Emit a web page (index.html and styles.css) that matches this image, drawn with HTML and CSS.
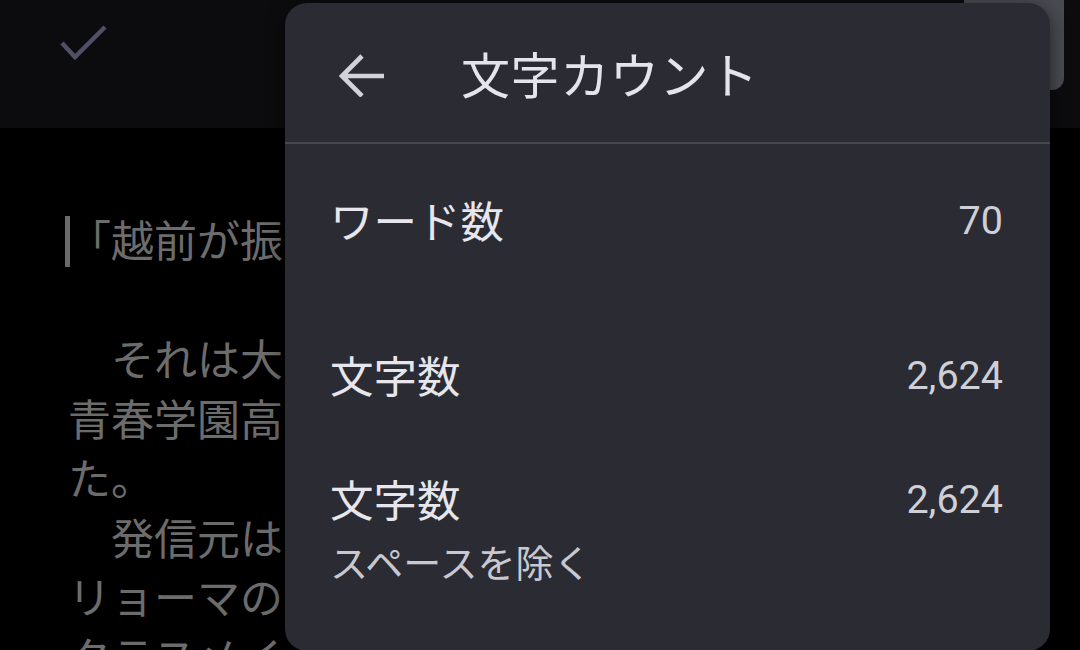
FILE: index.html
```html
<!DOCTYPE html>
<html lang="ja">
<head>
<meta charset="utf-8">
<title>文字カウント</title>
<link rel="stylesheet" href="styles.css">
</head>
<body>
<div class="screen">
  <header class="toolbar">
    <svg class="check" width="56" height="44" viewBox="0 0 56 44">
      <polyline points="6,23 19,37 49,7" fill="none" stroke="#4f4f66" stroke-width="4.5"/>
    </svg>
    <div class="tool-chip"></div>
  </header>
  <main class="editor">
    <div class="line"><span class="caret"></span>「越前が振</div>
    <div class="line">&nbsp;</div>
    <div class="line">　それは大</div>
    <div class="line">青春学園高</div>
    <div class="line">た。</div>
    <div class="line">　発信元は</div>
    <div class="line">リョーマの</div>
    <div class="line">クラスメイ</div>
  </main>

  <section class="menu">
    <div class="menu-head">
      <svg class="back" width="48" height="48" viewBox="0 0 48 48">
        <path d="M46 27H4M24 7L4 27L24 47" fill="none" stroke="#d2d2da" stroke-width="4.6"/>
      </svg>
      <h1 class="menu-title">文字カウント</h1>
    </div>
    <div class="menu-list">
      <div class="row row-first">
        <div class="label">ワード数</div>
        <div class="value">70</div>
      </div>
      <div class="row row-second">
        <div class="label">文字数</div>
        <div class="value">2,624</div>
      </div>
      <div class="row row-third">
        <div class="texts">
          <div class="label">文字数</div>
          <div class="sub">スペースを除く</div>
        </div>
        <div class="value">2,624</div>
      </div>
    </div>
  </section>
</div>
</body>
</html>
```
FILE: styles.css
```css
* { box-sizing: border-box; }
html, body {
  margin: 0;
  padding: 0;
  background: #000;
}
body {
  width: 1080px;
  height: 650px;
  overflow: hidden;
  font-family: "Noto Sans CJK JP", "Noto Sans", sans-serif;
}
.screen {
  position: relative;
  width: 1080px;
  height: 650px;
  overflow: hidden;
}
.toolbar {
  height: 128px;
  background: #0c0c0e;
  display: flex;
  align-items: flex-start;
}
.check {
  margin-left: 56px;
  margin-top: 20px;
  display: block;
}
.tool-chip {
  margin-left: auto;
  margin-right: 16px;
  width: 100px;
  height: 90px;
  background: #4a4a52;
  border-radius: 0 0 12px 12px;
}
.editor {
  width: 290px;
  height: 522px;
  overflow: hidden;
  padding: 81px 0 0 68px;
  color: #6c6c6c;
  font-size: 43px;
  line-height: 59.5px;
}
.line {
  white-space: nowrap;
}
.caret {
  display: inline-block;
  width: 5px;
  height: 51px;
  background: #6a6a6a;
  margin-left: -3px;
  margin-right: -2px;
  vertical-align: -10px;
}
.menu {
  position: absolute;
  left: 285px;
  top: 3px;
  width: 765px;
  height: 648px;
  background: #2b2b33;
  border-radius: 22px;
  box-shadow: 0 4px 18px rgba(0, 0, 0, 0.55);
}
.menu-head {
  height: 141px;
  display: flex;
  align-items: center;
  padding-left: 53px;
  border-bottom: 2px solid #47474f;
}
.back {
  display: block;
}
.menu-title {
  margin: 0 0 0 75px;
  font-size: 49px;
  font-weight: 400;
  color: #e4e4ea;
  line-height: 56px;
  letter-spacing: 0.6px;
}
.menu-list {
  padding: 52px 47px 0 46px;
}
.row {
  display: flex;
  justify-content: space-between;
  align-items: flex-start;
}
.row-second { margin-top: 106px; }
.row-third { margin-top: 75px; }
.label {
  font-size: 43.5px;
  line-height: 48px;
  color: #e6e6ec;
  margin-left: -1px;
}
.value {
  font-family: Roboto, "Noto Sans", sans-serif;
  font-size: 39.5px;
  line-height: 48px;
  padding-top: 1px;
  color: #cfcfd8;
}
.sub {
  margin-top: 16px;
  font-size: 38px;
  line-height: 44px;
  color: #c8c8d0;
  margin-left: -1px;
}
```
